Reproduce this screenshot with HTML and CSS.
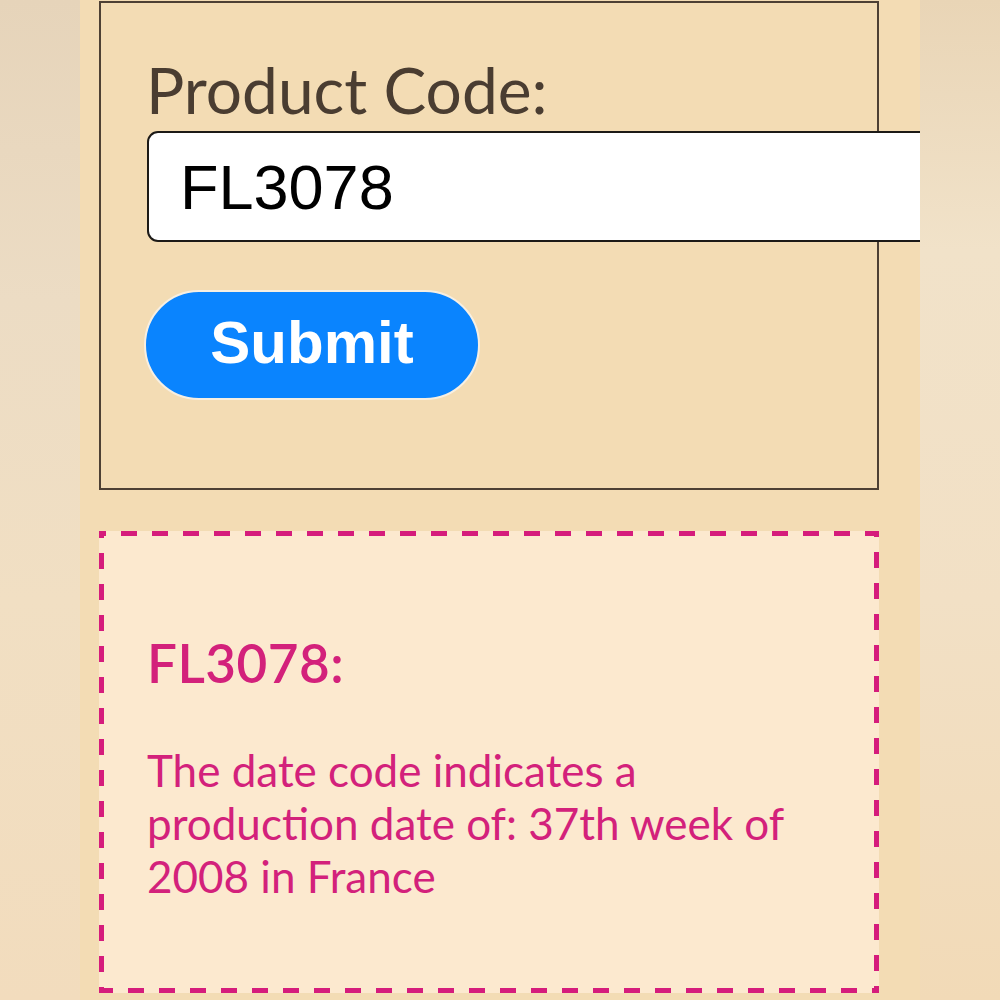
FILE: index.html
```html
<!DOCTYPE html>
<html lang="en">
<head>
<meta charset="utf-8">
<title>Product Code</title>
<link rel="stylesheet" href="styles.css">
</head>
<body>
<div class="page">
  <div class="side side-left"></div>
  <main class="column">
    <form class="code-form">
      <label class="label" for="code">Product Code:</label>
      <input class="code-input" id="code" type="text" value="FL3078">
      <button class="submit" type="button">Submit</button>
    </form>
    <section class="result">
      <h2 class="result-title">FL3078:</h2>
      <p class="result-text">The date code indicates a production date of: 37th week of 2008 in France</p>
    </section>
  </main>
  <div class="side side-right"></div>
</div>
</body>
</html>
```
FILE: styles.css
```css
* { box-sizing: border-box; }
html, body { margin: 0; padding: 0; }
body {
  width: 1000px;
  height: 1000px;
  overflow: hidden;
  font-family: Lato, "Open Sans", sans-serif;
}
.page {
  display: flex;
  height: 1000px;
}
.side {
  width: 80px;
  flex: none;
}
.side-left {
  background: linear-gradient(180deg, #e6d4ba 0%, #ecdcc4 30%, #f1dfc3 60%, #f2dcbd 100%);
}
.side-right {
  background: linear-gradient(180deg, #e9d5b6 0%, #f1e2c9 25%, #f2e0c5 60%, #f2dab7 100%);
}
.column {
  width: 840px;
  flex: none;
  background: #f3dcb4;
  overflow: hidden;
  padding: 1px 41px 0 19px;
}
.code-form {
  border: 2px solid #4d4034;
  height: 489px;
  padding: 47px 0 0 46px;
  display: flex;
  flex-direction: column;
  align-items: flex-start;
}
.label {
  font-size: 64px;
  line-height: 80px;
  color: #4a3d31;
  margin-left: -1px;
}
.code-input {
  margin-top: 1px;
  width: 800px;
  flex: none;
  height: 111px;
  border: 2px solid #1c1a17;
  border-radius: 11px;
  background: #fff;
  padding: 0 0 0 31px;
  font-family: "Liberation Sans", Arial, sans-serif;
  font-size: 63px;
  color: #000;
  outline: none;
}
.submit {
  margin-top: 48px;
  margin-left: -3px;
  width: 336px;
  height: 110px;
  border: 2px solid #f7efe2;
  border-radius: 56px;
  background: #0a84fe;
  color: #fff;
  font-family: "Liberation Sans", Arial, sans-serif;
  font-weight: bold;
  font-size: 60px;
  padding: 0 0 6px;
}
.result {
  margin-top: 41px;
  height: 462px;
  background:
    repeating-linear-gradient(90deg, #d51c7c 0 7px, transparent 7px 22px, #d51c7c 22px 31px) left top / 100% 5px no-repeat,
    repeating-linear-gradient(270deg, #d51c7c 0 7px, transparent 7px 22px, #d51c7c 22px 31px) left bottom / 100% 5px no-repeat,
    repeating-linear-gradient(180deg, #d51c7c 0 7px, transparent 7px 22px, #d51c7c 22px 31px) left top / 5px 100% no-repeat,
    repeating-linear-gradient(0deg, #d51c7c 0 7px, transparent 7px 22px, #d51c7c 22px 31px) right top / 5px 100% no-repeat,
    #fce9cf;
  padding: 100px 0 0 48px;
}
.result-title {
  margin: 0;
  font-size: 53px;
  font-weight: 600;
  line-height: 64px;
  color: #d3217b;
  letter-spacing: 0.5px;
}
.result-text {
  margin: 49px 0 0;
  width: 650px;
  font-size: 44px;
  line-height: 53px;
  color: #d3217b;
}
```
